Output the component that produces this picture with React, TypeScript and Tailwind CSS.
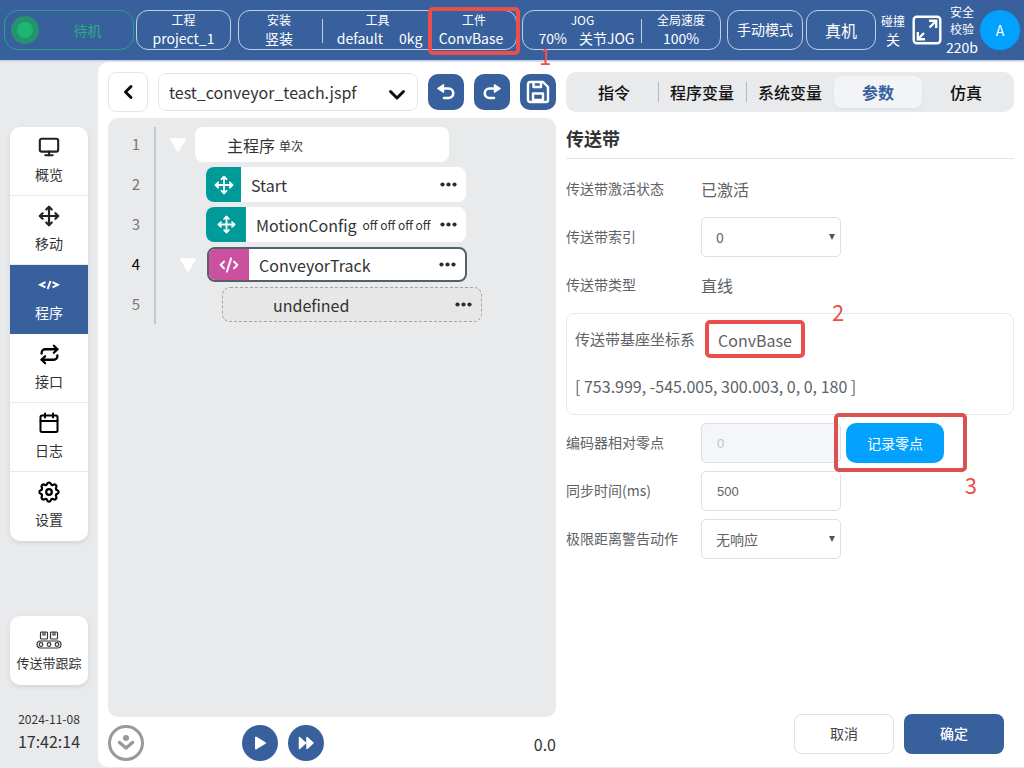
import React, { useState } from "react";
import { CodeXml, Monitor, Move, Repeat } from "lucide-react";

const divider = "absolute right-0 top-2 h-6 w-px bg-[#c3cfe2]";
const fieldBox = "h-10 w-full rounded-[5px] border border-[#dcdfe6] text-[14px] text-[#606266]";

function Mark({ className, children }: { className: string; children?: React.ReactNode }) {
  return (
    <span aria-hidden={!children} className={"pointer-events-none absolute z-10 " + className}>
      {children}
    </span>
  );
}

function StatusCell({ title, children, className = "", line = false }: { title: string; children: React.ReactNode; className?: string; line?: boolean }) {
  return (
    <div className={"relative flex flex-col items-center text-white " + className}>
      <span className="text-[12px] leading-[18px]">{title}</span>
      <span className="flex gap-4 whitespace-nowrap text-[14px] leading-[18px]">{children}</span>
      {line && <span className={divider} />}
    </div>
  );
}

function ExpandIcon() {
  return (
    <svg viewBox="0 0 30 30" className="h-[30px] w-[30px]" fill="none" stroke="#fff" strokeWidth="2.4">
      <rect x="1.7" y="1.700" width="26.600" height="26.600" rx="3" />
      <path d="M17.500 12.500 24 6M17 5.800h7.200V13M12 18l-6.500 6.500M5.800 17v7.200H13" />
    </svg>
  );
}

function Header() {
  return (
    <header className="flex h-[60px] shrink-0 items-center bg-[#38609d] px-1 shadow-[0_1px_2px_#b9c8e0]">
      <div className="flex h-10 grow basis-[130px] items-center rounded-[14px] border border-[#2f9c8d] pl-[6px] text-[14px] leading-5 text-[#27ae7c]">
        <span className="flex h-7 w-7 items-center justify-center rounded-full bg-[#259271]">
          <span className="h-4 w-4 rounded-full bg-[#1cb773]" />
        </span>
        <span className="grow pl-1 pr-px text-center">待机</span>
      </div>
      <div className="ml-[2px] h-10 grow basis-[95px] rounded-[12px] border border-[#c3cfe2]">
        <StatusCell title="工程">project_1</StatusCell>
      </div>
      <div className="ml-[7px] flex h-10 grow basis-[279px] rounded-[12px] border border-[#c3cfe2]">
        <StatusCell title="安装" className="grow basis-[84px] pr-1" line>竖装</StatusCell>
        <StatusCell title="工具" className="grow basis-[109px]" line>
          <span className="ml-1">default</span>
          <span>0kg</span>
        </StatusCell>
        <StatusCell title="工件" className="grow basis-[84px]">
          <span className="mr-[6px]">ConvBase</span>
          <Mark className="-left-1 -right-1 -top-1 h-12 rounded-[5px] border-4 border-[#eb4f4b]" />
        </StatusCell>
      </div>
      <div className="relative ml-[5px] flex h-10 grow basis-[199px] rounded-[12px] border border-[#c3cfe2]">
        <StatusCell title="JOG" className="grow basis-[119px]" line>
          <span className="-mr-1 ml-2">70%</span>
          <span>关节JOG</span>
        </StatusCell>
        <StatusCell title="全局速度" className="grow basis-[78px]">100%</StatusCell>
        <Mark className="left-4 top-[34px] text-[22px] leading-5 text-[#eb4f4b]">1</Mark>
      </div>
      <button className="ml-[6px] h-10 grow basis-[76px] rounded-[12px] border border-[#c3cfe2] pb-px text-[14px] text-white">手动模式</button>
      <button className="ml-[3px] h-10 grow basis-[70px] rounded-[12px] border border-[#c3cfe2] text-[16px] text-white">真机</button>
      <div className="ml-[5px] flex w-6 flex-col items-center text-white">
        <span className="text-[12px] leading-[18px]">碰撞</span>
        <span className="text-[14px] leading-[18px]">关</span>
      </div>
      <button aria-label="全屏" className="ml-[7px]"><ExpandIcon /></button>
      <div className="ml-1 flex w-8 flex-col items-center pb-px text-white">
        <span className="text-center text-[12px] leading-[17px]">安全<br />校验</span>
        <span className="text-[14px] leading-5">220b</span>
      </div>
      <button className="ml-[2px] h-10 w-10 shrink-0 rounded-full bg-[#02a1fd] text-[14px] text-white">A</button>
    </header>
  );
}

function GearIcon() {
  return (
    <svg viewBox="0 0 24 24" className="h-6 w-6" fill="none" stroke="#000" strokeWidth="2.200" strokeLinejoin="round">
      <circle cx="12" cy="12" r="2.800" />
      <path d="M10.300 3.600c.4-1.500 3-1.500 3.400 0a1.900 1.900 0 0 0 2.800 1.200c1.700-1 3.700 1 2.700 2.700a1.900 1.900 0 0 0 1.200 2.800c1.600.5 1.600 3 0 3.400a1.900 1.900 0 0 0-1.200 2.800c1 1.700-1 3.700-2.700 2.700a1.900 1.900 0 0 0-2.800 1.200c-.4 1.600-3 1.600-3.400 0a1.900 1.900 0 0 0-2.800-1.200c-1.700 1-3.700-1-2.700-2.700a1.900 1.900 0 0 0-1.200-2.800c-1.600-.4-1.600-2.900 0-3.400a1.900 1.900 0 0 0 1.200-2.800c-1-1.700 1-3.700 2.700-2.700a1.900 1.900 0 0 0 2.800-1.200z" />
    </svg>
  );
}

function SmallCode() {
  return (
    <svg viewBox="0 0 24 24" className="h-6 w-6" fill="none" stroke="#fff" strokeWidth="2">
      <path d="m8.500 9.200-5.300 2.600 5.300 2.600M15.500 9.200l5.300 2.600-5.300 2.600M13.500 8l-2.800 8" />
    </svg>
  );
}

function ConveyorIcon() {
  return (
    <svg viewBox="0 0 26 18" className="h-[18px] w-[26px]" fill="none" stroke="#333" strokeWidth="1.200">
      <rect x="4.500" y="1" width="7" height="7" rx="1" />
      <rect x="14.500" y="1" width="7" height="7" rx="1" />
      <path d="M7 1v3h2V1M17 1v3h2V1" />
      <rect x="1" y="10" width="24" height="7" rx="3.500" />
      <circle cx="5" cy="13.500" r="1.800" />
      <circle cx="13" cy="13.500" r="1.800" />
      <circle cx="21" cy="13.500" r="1.800" />
    </svg>
  );
}

function CalendarIcon() {
  return (
    <svg viewBox="0 0 24 24" className="h-6 w-6" fill="none" stroke="#000" strokeWidth="2" strokeLinecap="round" strokeLinejoin="round">
      <rect x="3.500" y="4.500" width="17" height="16.500" rx="1.500" />
      <path d="M3.500 10h17M8 2.500v4M16 2.500v4" />
    </svg>
  );
}

const menu = [
  { label: "概览", icon: <Monitor size={22} color="#222" strokeWidth={2.3} /> },
  { label: "移动", icon: <Move size={22} color="#222" strokeWidth={2.4} /> },
  { label: "程序", icon: <SmallCode />, active: true },
  { label: "接口", icon: <Repeat size={21} color="#000" strokeWidth={2.6} /> },
  { label: "日志", icon: <CalendarIcon /> },
  { label: "设置", icon: <GearIcon /> },
];

function Sidebar() {
  return (
    <aside className="flex w-[98px] shrink-0 flex-col px-[10px] pb-[15px] pt-[65px]">
      <nav className="flex flex-col overflow-hidden rounded-[10px] bg-white shadow-[0_2px_5px_#d2d4d8]">
        {menu.map((m) => (
          <button
            key={m.label}
            className={
              "flex h-[69px] flex-col items-center gap-[3px] border-b pt-2 text-[14px] last:border-b-0 " +
              (m.active ? "border-[#38609d] bg-[#38609d] text-white" : "border-[#e8e9eb] text-[#333]")
            }
          >
            <span className="flex h-6 items-center">{m.icon}</span>
            <span className="leading-6">{m.label}</span>
          </button>
        ))}
      </nav>
      <button className="mt-auto flex h-[69px] flex-col items-center justify-center gap-1 rounded-[10px] bg-white pt-[2px] text-[13px] text-[#333] shadow-[0_2px_5px_#d2d4d8]">
        <ConveyorIcon />
        <span className="whitespace-nowrap leading-5">传送带跟踪</span>
      </button>
      <div className="mt-6 text-center text-[#333]">
        <div className="text-[12px] leading-5">2024-11-08</div>
        <div className="text-[16px] leading-6">17:42:14</div>
      </div>
    </aside>
  );
}

function TurnIcon({ flip = false }: { flip?: boolean }) {
  return (
    <svg viewBox="0 0 20 20" className={"h-5 w-5 " + (flip ? "-scale-x-100" : "")} fill="none" stroke="#fff" strokeWidth="2.600" strokeLinecap="round">
      <path d="M6 6.500h6.500a4.700 4.700 0 0 1 0 9.500H8" />
      <path d="M1.800 6.500 7.500 2.800v7.400z" fill="#fff" strokeWidth="1.400" strokeLinejoin="round" />
    </svg>
  );
}

function SaveIcon() {
  return (
    <svg viewBox="0 0 24 24" className="h-6 w-6" fill="none" stroke="#fff" strokeWidth="2.400" strokeLinejoin="round">
      <path d="M2 4a2 2 0 0 1 2-2h13l5 5v13a2 2 0 0 1-2 2H4a2 2 0 0 1-2-2z" />
      <path d="M7.500 2v5h7.500V2M7 20v-6.500h10V20z" />
    </svg>
  );
}

function Toggle() {
  return (
    <button aria-label="折叠" className="flex h-[35px] w-4 items-center">
      <svg viewBox="0 0 16 14" className="h-[14px] w-4" fill="#fff" stroke="#fff" strokeWidth="2" strokeLinejoin="round">
        <path d="M1.200 1.200h13.600L8 12.800z" />
      </svg>
    </button>
  );
}

function Dots() {
  return (
    <button aria-label="更多" className="ml-auto mr-[9px] shrink-0">
      <svg viewBox="0 0 17 5" className="h-[5px] w-[17px]" fill="#2c2c2c">
        <circle cx="2.500" cy="2.500" r="2.100" />
        <circle cx="8.500" cy="2.500" r="2.100" />
        <circle cx="14.500" cy="2.500" r="2.100" />
      </svg>
    </button>
  );
}

function ProgramTree() {
  const rowBase = "flex h-[35px] items-center overflow-hidden rounded-[8px] text-[16px] leading-5 text-[#333]";
  return (
    <section className="flex grow rounded-[10px] bg-[#e9eaec] px-4 pt-[9px]">
      <ol className="flex w-6 flex-col gap-[5px] text-center text-[15px] text-[#777]">
        {[1, 2, 3, 4, 5].map((n) => (
          <li key={n} className={"h-[35px] leading-[33px] " + (n === 4 ? "text-black" : "")}>{n}</li>
        ))}
      </ol>
      <div className="ml-[6px] h-[197px] w-[2px] bg-[#c5c7ca]" />
      <div className="flex flex-col gap-[5px] pl-[14px]">
        <div className="flex gap-[9px]">
          <Toggle />
          <div className={rowBase + " w-[254px] gap-1 bg-white pl-8"}>
            主程序 <small className="pt-[2px] text-[12px]">单次</small>
          </div>
        </div>
        <div className={rowBase + " ml-9 w-[260px] bg-white"}>
          <span className="mr-[10px] flex h-full w-[35px] items-center justify-center bg-[#009a98]"><Move size={20} color="#fff" strokeWidth={2.3} /></span>
          Start
          <Dots />
        </div>
        <div className={rowBase + " ml-9 w-[260px] bg-white"}>
          <span className="mr-[10px] flex h-full w-10 shrink-0 items-center justify-center bg-[#009a98]"><Move size={19} color="#fff" strokeWidth={2.3} /></span>
          MotionConfig
          <span className="ml-[6px] whitespace-nowrap text-[12px]">off off off off</span>
          <Dots />
        </div>
        <div className="flex gap-[11px] pl-[10px]">
          <Toggle />
          <div className={rowBase + " w-[260px] border-2 border-[#52616a] bg-white"}>
            <span className="mr-[10px] flex h-full w-10 shrink-0 items-center justify-center bg-[#cb509d]"><CodeXml size={20} color="#fff" strokeWidth={2.4} /></span>
            ConveyorTrack
            <Dots />
          </div>
        </div>
        <div className={rowBase + " ml-[52px] w-[260px] border border-dashed border-[#a5a5a5] bg-[#e7e7e7] pl-[50px]"}>
          undefined
          <Dots />
        </div>
      </div>
    </section>
  );
}

function Editor() {
  const tool = "flex h-9 w-9 shrink-0 items-center justify-center rounded-[10px] bg-[#38609d]";
  const round = "flex h-9 w-9 items-center justify-center rounded-full bg-[#38609d]";
  return (
    <div className="flex grow basis-[448px] flex-col">
      <div className="flex items-center gap-[10px]">
        <button aria-label="返回" className="flex h-10 w-10 shrink-0 items-center justify-center rounded-[8px] border border-[#e4e5e8]">
          <svg viewBox="0 0 12 16" className="h-4 w-3" fill="none" stroke="#0b0b1a" strokeWidth="3" strokeLinecap="round" strokeLinejoin="round">
            <path d="M9 2.500 3.500 8 9 13.500" />
          </svg>
        </button>
        <div className="relative grow">
          <select aria-label="程序文件" className="h-[38px] w-full appearance-none rounded-[8px] border border-[#e4e5e8] bg-white pl-[10px] pr-10 text-[16px] text-[#333]">
            <option>test_conveyor_teach.jspf</option>
          </select>
          <svg viewBox="0 0 18 12" className="pointer-events-none absolute right-3 top-4 h-3 w-[18px]" fill="none" stroke="#0b0b1a" strokeWidth="3" strokeLinecap="round" strokeLinejoin="round">
            <path d="M2.500 2.500 9 9l6.500-6.500" />
          </svg>
        </div>
        <button aria-label="撤销" className={tool}><TurnIcon /></button>
        <button aria-label="重做" className={tool}><TurnIcon flip /></button>
        <button aria-label="保存" className={tool}><SaveIcon /></button>
      </div>
      <div className="mt-[6px] flex grow"><ProgramTree /></div>
      <div className="flex h-[50px] items-center pt-[2px]">
        <button aria-label="展开" className="flex h-9 w-9 items-center justify-center rounded-full border-3 border-[#999]">
          <svg viewBox="0 0 20 20" className="h-5 w-5 shrink-0" fill="none" stroke="#999" strokeWidth="3.500">
            <path d="M3.500 9.500 10 15l6.500-5.500" strokeLinecap="round" strokeLinejoin="round" />
            <circle cx="10" cy="5" r="3" fill="#999" stroke="none" />
          </svg>
        </button>
        <button aria-label="运行" className={"ml-[98px] " + round}>
          <svg viewBox="0 0 16 16" className="h-4 w-4" fill="#fff" stroke="#fff" strokeWidth="2" strokeLinejoin="round"><path d="M4 2.500v11L13 8z" /></svg>
        </button>
        <button aria-label="快进" className={"ml-[10px] " + round}>
          <svg viewBox="0 0 18 16" className="h-4 w-[18px]" fill="#fff" stroke="#fff" strokeWidth="1.500" strokeLinejoin="round"><path d="M2.500 2.500v11L8.500 8zM10 2.500v11L16 8z" /></svg>
        </button>
        <span className="ml-auto pt-px text-[16px] text-[#333]">0.0</span>
      </div>
    </div>
  );
}

const tabs = ["指令", "程序变量", "系统变量", "参数", "仿真"];

function Tabs() {
  const [active, setActive] = useState("参数");
  return (
    <div role="tablist" className="flex h-10 items-center rounded-[10px] bg-[#e9eaec] px-1 text-[16px] font-medium">
      {tabs.map((t, i) => (
        <button
          key={t}
          role="tab"
          aria-selected={t === active}
          onClick={() => setActive(t)}
          className={
            "relative h-8 grow basis-[88px] whitespace-nowrap " +
            (t === active ? "rounded-[8px] bg-[#f3f4f5] font-bold text-[#38609d] shadow-[0_2px_4px_#dde2e8]" : "text-[#111]")
          }
        >
          {t}
          {i < 2 && <span className="absolute -right-px top-[6px] h-5 w-px bg-[#b5b8bd]" />}
        </button>
      ))}
    </div>
  );
}

function Row({ label, htmlFor, children }: { label: string; htmlFor?: string; children: React.ReactNode }) {
  return (
    <div className="flex h-12 items-center text-[16px] text-[#606266]">
      <label htmlFor={htmlFor} className="w-[135px] shrink-0 pb-[2px] text-[14px]">{label}</label>
      {children}
    </div>
  );
}

function Select({ id, value }: { id: string; value: string }) {
  return (
    <div className="relative w-[140px]">
      <select id={id} className={fieldBox + " appearance-none bg-white pl-[14px] pr-6"}>
        <option>{value}</option>
      </select>
      <svg viewBox="0 0 6 6" className="pointer-events-none absolute right-[6px] top-[17px] h-[6px] w-[6px]" fill="#555"><path d="M0 0h6L3 6z" /></svg>
    </div>
  );
}

function Parameters() {
  return (
    <div className="flex grow basis-[448px] flex-col">
      <Tabs />
      <h2 className="mt-[6px] h-[41px] border-b border-[#e3e4e7] text-[18px] font-bold leading-10 text-[#333]">传送带</h2>
      <form className="mt-[6px] flex grow flex-col" onSubmit={(e) => e.preventDefault()}>
        <Row label="传送带激活状态"><output>已激活</output></Row>
        <Row label="传送带索引" htmlFor="index"><Select id="index" value="0" /></Row>
        <Row label="传送带类型"><output>直线</output></Row>
        <div className="relative mb-1 mt-1 flex flex-col gap-2 rounded-[8px] border border-[#e8e9eb] px-2 pb-1 pt-[6px] text-[16px] text-[#606266]">
          <div className="flex h-10 items-center">
            <span className="pb-[2px] text-[15px]">传送带基座坐标系</span>
            <span className="relative ml-[10px] flex h-10 w-[100px] items-center justify-center">
              ConvBase
              <Mark className="inset-x-0 bottom-[2px] top-0 rounded-[5px] border-4 border-[#eb4f4b]" />
            </span>
          </div>
          <div className="h-[42px] leading-[36px]">[ 753.999, -545.005, 300.003, 0, 0, 180 ]</div>
          <Mark className="-top-4 left-[265px] text-[22px] leading-[26px] text-[#eb4f4b]">2</Mark>
        </div>
        <Row label="编码器相对零点" htmlFor="zero">
          <div className="w-[140px]">
            <input id="zero" disabled defaultValue="0" className={fieldBox + " bg-[#f4f6fa] px-[15px] font-['Liberation_Sans',sans-serif] !text-[13px] !text-[#c0c4cc]"} />
          </div>
          <span className="relative ml-[5px]">
            <button type="button" className="h-10 w-[98px] rounded-[10px] bg-[#02a1fd] text-[14px] text-white">记录零点</button>
            <Mark className="-bottom-[9px] -left-3 -right-[23px] -top-[10px] rounded-[5px] border-4 border-[#d9524f]" />
            <Mark className="-right-[33px] top-12 text-[22px] leading-[26px] text-[#eb4f4b]">3</Mark>
          </span>
        </Row>
        <Row label="同步时间(ms)" htmlFor="sync">
          <div className="w-[140px]">
            <input id="sync" defaultValue="500" className={fieldBox + " px-[15px] font-['Liberation_Sans',sans-serif] !text-[13px]"} />
          </div>
        </Row>
        <Row label="极限距离警告动作" htmlFor="limit"><Select id="limit" value="无响应" /></Row>
        <div className="mb-[13px] mr-[10px] mt-auto flex justify-end gap-[10px] text-[14px]">
          <button type="button" className="h-10 w-[100px] rounded-[8px] border border-[#dcdfe6] pb-[2px] text-[#444]">取消</button>
          <button type="submit" className="h-10 w-[100px] rounded-[8px] bg-[#38609d] pb-[2px] font-medium text-white">确定</button>
        </div>
      </form>
    </div>
  );
}

export default function App() {
  return (
    <div className="flex min-h-screen flex-col bg-[#e9eaec] font-['Noto_Sans_CJK_SC',sans-serif]">
      <Header />
      <div className="mt-[2px] flex grow">
        <Sidebar />
        <main className="mb-px flex grow gap-[10px] rounded-l-[10px] bg-white px-[10px] pt-[10px]">
          <Editor />
          <Parameters />
        </main>
      </div>
    </div>
  );
}
